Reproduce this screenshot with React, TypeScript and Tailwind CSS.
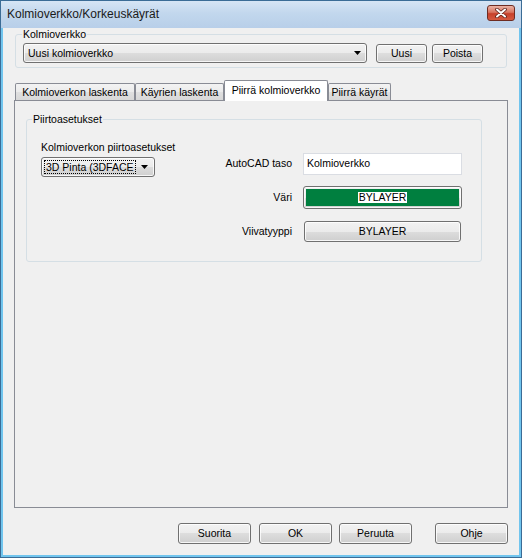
import React from 'react';

const vistaBtn =
  'rounded-[3px] border border-[#707070] bg-[linear-gradient(#f2f2f2_0%,#ebebeb_50%,#dddddd_50%,#cfcfcf_100%)] shadow-[inset_0_0_0_1px_rgba(255,255,255,0.8)]';

const Arrow = () => (
  <svg width="7" height="4" viewBox="0 0 7 4" className="shrink-0">
    <path d="M0 0h7L3.5 4z" fill="#000" />
  </svg>
);

const DialogButton = ({ label, className }: { label: string; className?: string }) => (
  <button className={`${vistaBtn} w-[73px] h-[21px] flex items-center justify-center leading-none ${className ?? ''}`}>
    {label}
  </button>
);

const tabs = [
  { label: 'Kolmioverkon laskenta', cls: 'w-[120px]', active: false },
  { label: 'Käyrien laskenta', cls: 'w-[89px]', active: false },
  { label: 'Piirrä kolmioverkko', cls: 'w-[104px]', active: true },
  { label: 'Piirrä käyrät', cls: 'w-[63px]', active: false },
];

export default function App() {
  return (
    <div className="w-[522px] h-[558px] flex flex-col border border-[#3b6c96] bg-[#71c5ee] font-['Liberation_Sans',Arial,sans-serif] text-[10.5px] text-black select-none">
      {/* title bar */}
      <div className="h-[27px] flex items-start pl-[6px] pr-[6px] bg-[linear-gradient(#d6e5f5_0%,#c2d7ed_45%,#b8cfe9_100%)]">
        <span className="text-[12px] leading-[14px] mt-[6px] text-[#1a1a1a]">Kolmioverkko/Korkeuskäyrät</span>
        <div className="ml-auto mt-[4px] w-[28px] h-[16px] rounded-[3px] border border-[#6e2c22] bg-[linear-gradient(#eab3a5_0%,#d8745f_45%,#c7402a_55%,#d55a40_100%)] flex items-center justify-center">
          <svg width="12" height="10" viewBox="0 0 12 10">
            <path d="M2 1.5l8 7M10 1.5l-8 7" stroke="#5a2018" strokeWidth="3.6" strokeLinecap="round" />
            <path d="M2 1.5l8 7M10 1.5l-8 7" stroke="#fff" strokeWidth="2" strokeLinecap="round" />
          </svg>
        </div>
      </div>

      {/* client area */}
      <div className="flex-1 mx-[2px] mb-[2px] bg-[#f0f0f0] flex flex-col">
        <fieldset className="mx-[12px] border border-[#d5dfe5] rounded-[3px] pl-[6px] pb-[4px]">
          <legend className="px-[1px] leading-[13px]">Kolmioverkko</legend>
          <div className="flex items-center mt-[2px] ml-[1px]">
            <div className={`${vistaBtn} w-[344px] h-[20px] flex items-center pl-[4px] pr-[5px]`}>
              <span className="flex-1 leading-none">Uusi kolmioverkko</span>
              <Arrow />
            </div>
            <button className={`${vistaBtn} ml-[9px] w-[51px] h-[19px] flex items-center justify-center leading-none`}>Uusi</button>
            <button className={`${vistaBtn} ml-[5px] w-[51px] h-[19px] flex items-center justify-center leading-none`}>Poista</button>
          </div>
        </fieldset>

        {/* tab control */}
        <div className="mt-[12px] ml-[11px] w-[494px] flex flex-col">
          <div className="h-[20px] flex items-start pl-[1px]">
            {tabs.map((t) =>
              t.active ? (
                <div
                  key={t.label}
                  className={`${t.cls} h-[21px] relative z-10 bg-white border border-b-0 border-[#898c95] rounded-t-[2px] flex items-center justify-center pb-[2px] leading-none`}
                >
                  {t.label}
                </div>
              ) : (
                <div
                  key={t.label}
                  className={`${t.cls} h-[17px] mt-[3px] border border-b-0 border-[#898c95] rounded-t-[2px] bg-[linear-gradient(#f3f3f3_0%,#ebebeb_50%,#e0e0e0_50%,#d8d8d8_100%)] flex items-center justify-center leading-none`}
                >
                  {t.label}
                </div>
              )
            )}
          </div>
          <div className="h-[408px] border border-[#898c95] bg-[#f0f0f0]">
            <fieldset className="ml-[11px] mt-[12px] w-[456px] border border-[#d5dfe5] rounded-[3px] pl-[5px]">
              <legend className="px-[1px] leading-[13px]">Piirtoasetukset</legend>
              <div className="flex ml-[9px] pb-[19px]">
                <div className="w-[114px] pt-[15px]">
                  <div className="leading-[13px] whitespace-nowrap">Kolmioverkon piirtoasetukset</div>
                  <div className={`${vistaBtn} mt-[3px] h-[20px] flex items-center pl-[2px] pr-[6px]`}>
                    <span className="flex-1 flex">
                      <span className="border border-dotted border-black px-[1px] leading-[12px] whitespace-nowrap">3D Pinta (3DFACE</span>
                    </span>
                    <Arrow />
                  </div>
                </div>
                <div className="ml-[45px] pt-[27px] flex flex-col">
                  <div className="flex items-center h-[22px]">
                    <span className="w-[92px] text-right whitespace-nowrap">AutoCAD taso</span>
                    <div className="ml-[11px] w-[159px] h-[22px] bg-white border border-[#dadde3] flex items-center pl-[3px]">
                      Kolmioverkko
                    </div>
                  </div>
                  <div className="flex items-center h-[23px] mt-[11px]">
                    <span className="w-[92px] text-right">Väri</span>
                    <div className={`${vistaBtn} ml-[11px] w-[159px] h-[23px] p-[2px] flex`}>
                      <div className="flex-1 bg-[#007f3f] flex items-center justify-center">
                        <span className="bg-white px-[1px] leading-[11px]">BYLAYER</span>
                      </div>
                    </div>
                  </div>
                  <div className="flex items-center h-[21px] mt-[12px]">
                    <span className="w-[92px] text-right">Viivatyyppi</span>
                    <button className={`${vistaBtn} ml-[12px] w-[157px] h-[21px] flex items-center justify-center leading-none`}>
                      BYLAYER
                    </button>
                  </div>
                </div>
              </div>
            </fieldset>
          </div>
        </div>

        {/* bottom buttons */}
        <div className="mt-[15px] flex ml-[175px]">
          <DialogButton label="Suorita" />
          <DialogButton label="OK" className="ml-[8px]" />
          <DialogButton label="Peruuta" className="ml-[7px]" />
          <DialogButton label="Ohje" className="ml-[23px]" />
        </div>
      </div>
    </div>
  );
}
